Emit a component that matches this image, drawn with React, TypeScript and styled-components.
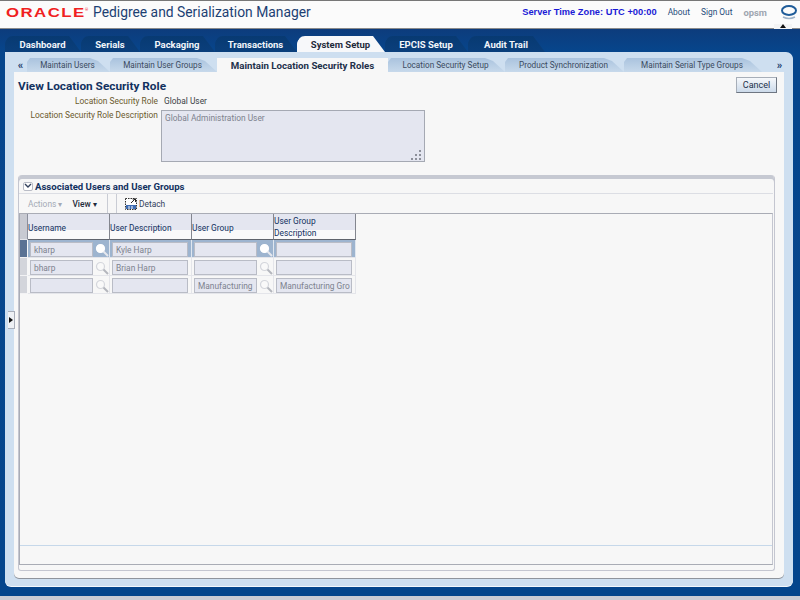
import React from "react";
import styled, { createGlobalStyle } from "styled-components";

const mainTabs = [
  { label: "Dashboard", width: 76 },
  { label: "Serials", width: 59 },
  { label: "Packaging", width: 75 },
  { label: "Transactions", width: 82 },
  { label: "System Setup", width: 88, active: true },
  { label: "EPCIS Setup", width: 83 },
  { label: "Audit Trail", width: 77 },
];

const subTabs = [
  { label: "Maintain Users", width: 83 },
  { label: "Maintain User Groups", width: 107 },
  { label: "Maintain Location Security Roles", width: 171, active: true },
  { label: "Location Security Setup", width: 117 },
  { label: "Product Synchronization", width: 119 },
  { label: "Maintain Serial Type Groups", width: 138 },
];

const rows = [
  { username: "kharp", description: "Kyle Harp", group: "", groupDescription: "", selected: true },
  { username: "bharp", description: "Brian Harp", group: "", groupDescription: "" },
  { username: "", description: "", group: "Manufacturing", groupDescription: "Manufacturing Gro" },
];

const Lens: React.FC<{ $on?: boolean }> = ({ $on }) => (
  <svg width="14" height="14" viewBox="0 0 14 14">
    <circle cx="5.5" cy="5.5" r="4" fill={$on ? "#ffffff" : "#f9f9f9"} stroke={$on ? "#ffffff" : "#d4d6dc"} strokeWidth="1.2" />
    <path d="M8.5 8.5 L13 13" stroke={$on ? "#e6e8ee" : "#b4b6bd"} strokeWidth="2" />
  </svg>
);

const App: React.FC = () => (
  <Page>
    <GlobalStyle />
    <Header>
      <Logo>ORACLE</Logo>
      <Mark>®</Mark>
      <Product>Pedigree and Serialization Manager</Product>
      <HeaderLinks>
        <TimeZone>Server Time Zone: UTC +00:00</TimeZone>
        <HeaderLink>About</HeaderLink>
        <HeaderLink>Sign Out</HeaderLink>
        <UserName>opsm</UserName>
        <svg width="18" height="15" viewBox="0 0 18 15">
          <ellipse cx="9" cy="5.5" rx="7" ry="4.4" fill="none" stroke="#1f5c99" strokeWidth="2" />
          <path d="M3 12 Q9 15 15 12" fill="none" stroke="#9fb3c8" strokeWidth="1.5" />
        </svg>
      </HeaderLinks>
      <CollapseHandle />
    </Header>
    <Body>
      <MainTabs>
        {mainTabs.map((t) => (
          <MainTab key={t.label} $w={t.width} $active={t.active}>
            {t.label}
          </MainTab>
        ))}
      </MainTabs>
      <Panel>
        <SplitterHandle />
        <SubTabs>
          <ScrollLeft>«</ScrollLeft>
          {subTabs.map((t) => (
            <SubTab key={t.label} $w={t.width} $active={t.active}>
              {t.label}
            </SubTab>
          ))}
          <ScrollRight>»</ScrollRight>
        </SubTabs>
        <Content>
          <TitleRow>
            <Title>View Location Security Role</Title>
            <CancelButton>Cancel</CancelButton>
          </TitleRow>
          <FormRow>
            <FieldLabel>Location Security Role</FieldLabel>
            <FieldValue>Global User</FieldValue>
          </FormRow>
          <DescriptionRow>
            <FieldLabel>Location Security Role Description</FieldLabel>
            <TextArea>
              Global Administration User
              <Grip>
                <svg width="12" height="12" viewBox="0 0 12 12" fill="#8d909a">
                  <rect x="8" y="1" width="2" height="2" />
                  <rect x="4" y="5" width="2" height="2" />
                  <rect x="8" y="5" width="2" height="2" />
                  <rect x="0" y="9" width="2" height="2" />
                  <rect x="4" y="9" width="2" height="2" />
                  <rect x="8" y="9" width="2" height="2" />
                </svg>
              </Grip>
            </TextArea>
          </DescriptionRow>
          <Section>
            <SectionHeader>
              <Disclosure>
                <svg width="8" height="6" viewBox="0 0 8 6">
                  <path d="M1 1 L4 4 L7 1" fill="none" stroke="#33415c" strokeWidth="1.4" />
                </svg>
              </Disclosure>
              <SectionTitle>Associated Users and User Groups</SectionTitle>
            </SectionHeader>
            <Toolbar>
              <MenuGroup>
                <MenuItem $muted>Actions ▾</MenuItem>
                <MenuItem>View ▾</MenuItem>
              </MenuGroup>
              <DetachButton>
                <svg width="12" height="13" viewBox="0 0 12 13">
                  <rect x="0.5" y="1.5" width="11" height="11" fill="#fff" stroke="#333" strokeDasharray="1.5 1" />
                  <rect x="1" y="8" width="10" height="4" fill="#3f6db3" />
                  <path d="M4 9 V12 M7 9 V12" stroke="#fff" />
                  <path d="M6 6 L10 2 M7.5 2 H10.5 V5" stroke="#222" fill="none" />
                </svg>
                Detach
              </DetachButton>
            </Toolbar>
            <TableBox>
              <TableArea>
                <Grid>
                  <CornerCell />
                  <HeadCell>Username</HeadCell>
                  <HeadCell>User Description</HeadCell>
                  <HeadCell>User Group</HeadCell>
                  <HeadCell $stacked>
                    <span>User Group</span>
                    <span>Description</span>
                  </HeadCell>
                  {rows.map((r) => (
                    <React.Fragment key={r.username + r.group}>
                      <RowHeader $on={r.selected} />
                      <BodyCell $on={r.selected}>
                        <CellInput $w={63}>{r.username}</CellInput>
                        <LensBox><Lens $on={r.selected} /></LensBox>
                      </BodyCell>
                      <BodyCell $on={r.selected}>
                        <CellInput $w={76}>{r.description}</CellInput>
                      </BodyCell>
                      <BodyCell $on={r.selected}>
                        <CellInput $w={65}>{r.group}</CellInput>
                        <LensBox><Lens $on={r.selected} /></LensBox>
                      </BodyCell>
                      <BodyCell $on={r.selected}>
                        <CellInput $w={76}>{r.groupDescription}</CellInput>
                      </BodyCell>
                    </React.Fragment>
                  ))}
                </Grid>
              </TableArea>
              <TableFooter />
            </TableBox>
          </Section>
        </Content>
      </Panel>
    </Body>
  </Page>
);

const GlobalStyle = createGlobalStyle`
  html, body {
    margin: 0;
    padding: 0;
    overflow: hidden;
  }
  * {
    box-sizing: border-box;
  }
  body {
    font-family: Roboto, "Liberation Sans", sans-serif;
    font-size: 8.4px;
  }
`;

const Page = styled.div`
  width: 800px;
  height: 600px;
  display: flex;
  flex-direction: column;
  background: #c9cbd4;
  padding-bottom: 4px;
`;

const Header = styled.header`
  position: relative;
  height: 29px;
  flex: none;
  display: flex;
  align-items: center;
  padding: 0 2px 5px 6px;
  background: #fbfbfb;
  border-top: 1px solid #777;
  border-bottom: 1px solid #8a8a8a;
`;

const Logo = styled.span`
  font-family: "Liberation Sans", sans-serif;
  font-size: 14px;
  font-weight: 700;
  letter-spacing: 1.2px;
  color: #f02020;
  line-height: 1;
  display: inline-block;
  width: 79px;
  transform: scale(1.2, 0.95);
  transform-origin: left center;
`;

const Mark = styled.span`
  font-size: 4px;
  color: #f02020;
  width: 8px;
  margin-bottom: 6px;
`;

const Product = styled.span`
  font-size: 13.85px;
  color: #1c3f73;
`;

const HeaderLinks = styled.div`
  margin-left: auto;
  display: flex;
  align-items: center;
  gap: 11px;
`;

const TimeZone = styled.span`
  font-family: "Liberation Sans", sans-serif;
  font-size: 9.3px;
  font-weight: 700;
  color: #1a1ad6;
`;

const HeaderLink = styled.span`
  font-size: 8.4px;
  color: #264b7a;
`;

const UserName = styled.span`
  font-size: 9.4px;
  font-weight: 700;
  color: #9ea6b0;
  margin-right: 2px;
`;

const CollapseHandle = styled.div`
  position: absolute;
  right: 8px;
  bottom: -1px;
  width: 18px;
  height: 5px;
  background: #f4f4f4;
  &::after {
    content: "";
    position: absolute;
    left: 6px;
    top: 0;
    border: 3px solid transparent;
    border-top: 0;
    border-bottom: 4px solid #111;
  }
`;

const Body = styled.main`
  flex: 1;
  display: flex;
  flex-direction: column;
  padding: 7px 7px 10px 5px;
  background: linear-gradient(#0d3c7c 0, #06468d 24px, #04458c 100%);
  min-height: 0;
`;

const MainTabs = styled.nav`
  display: flex;
  height: 16px;
  flex: none;
`;

const MainTab = styled.div<{ $w: number; $active?: boolean }>`
  width: ${(p) => p.$w}px;
  height: 16px;
  display: flex;
  align-items: center;
  justify-content: center;
  padding-right: 1px;
  font-size: 9.5px;
  font-weight: 700;
  color: ${(p) => (p.$active ? "#1e2a3a" : "#f2f6fb")};
  background: ${(p) => (p.$active ? "#f7f8fa" : "linear-gradient(#083a72, #0a3f7c)")};
  border-radius: 8px 10px 0 0;
  clip-path: polygon(0 100%, 0 6px, 4px 0, calc(100% - 12px) 0, 100% 100%);
`;

const Panel = styled.section`
  position: relative;
  flex: 1;
  display: flex;
  flex-direction: column;
  min-height: 0;
  padding: 6px 9px 8px;
  background: #cedff0;
  border-radius: 0 7px 6px 6px;
  box-shadow: 0 1px 0 #f4f8fc;
`;

const SplitterHandle = styled.div`
  position: absolute;
  left: 3px;
  top: 259px;
  width: 7px;
  height: 18px;
  background: #eef1f5;
  border: 1px solid #a9afba;
  border-left: 0;
  &::after {
    content: "";
    position: absolute;
    left: 1px;
    top: 5px;
    border: 3px solid transparent;
    border-right: 0;
    border-left: 4px solid #111;
  }
`;

const SubTabs = styled.div`
  display: flex;
  height: 14px;
  flex: none;
  margin-right: -9px;
`;

const ScrollLeft = styled.div`
  display: flex;
  width: 13px;
  align-items: center;
  justify-content: center;
  font-size: 11px;
  font-weight: 700;
  color: #23406f;
`;

const ScrollRight = styled(ScrollLeft)`
  width: 31px;
  padding-left: 4px;
`;

const SubTab = styled.div<{ $w: number; $active?: boolean }>`
  width: ${(p) => p.$w}px;
  height: 14px;
  display: flex;
  align-items: center;
  justify-content: center;
  padding-right: ${(p) => (p.$active ? 0 : 2)}px;
  font-size: ${(p) => (p.$active ? 9.7 : 8.2)}px;
  font-weight: ${(p) => (p.$active ? 700 : 400)};
  color: ${(p) => (p.$active ? "#22304a" : "#3b4a60")};
  white-space: nowrap;
  background: ${(p) => (p.$active ? "#f7f7f7" : "linear-gradient(#aac3de, #c7d9eb)")};
  clip-path: ${(p) =>
    p.$active ? "none" : "polygon(0 100%, 0 4px, 3px 0, calc(100% - 20px) 0, calc(100% - 12px) 3px, 100% 100%)"};
`;

const Content = styled.div`
  flex: 1;
  min-height: 0;
  display: flex;
  flex-direction: column;
  padding: 4px 9px 7px 4px;
  background: #f7f7f7;
  border-radius: 0 0 5px 5px;
  box-shadow: 0 1px 0 #8f949c;
`;

const TitleRow = styled.div`
  display: flex;
  justify-content: space-between;
  align-items: flex-start;
  height: 18px;
  flex: none;
  margin-right: -2px;
`;

const Title = styled.h1`
  margin: 3px 0 0;
  font-size: 11.8px;
  line-height: 15px;
  font-weight: 700;
  color: #12315f;
`;

const CancelButton = styled.button`
  width: 41px;
  height: 16px;
  margin-top: 1px;
  padding: 0;
  font: inherit;
  font-size: 9px;
  color: #22304a;
  background: linear-gradient(#f6f8fb, #ccdaea);
  border: 1px solid #a7aeb8;
  border-right-color: #6e7682;
  border-bottom-color: #6e7682;
`;

const FormRow = styled.div`
  display: flex;
  align-items: center;
  height: 14px;
  flex: none;
  gap: 6px;
`;

const FieldLabel = styled.div`
  width: 140px;
  text-align: right;
  white-space: nowrap;
  color: #6b5a2e;
`;

const FieldValue = styled.div`
  color: #3a3f46;
`;

const DescriptionRow = styled.div`
  display: flex;
  align-items: flex-start;
  gap: 3px;
  margin-top: 2px;
  flex: none;
`;

const TextArea = styled.div`
  position: relative;
  width: 264px;
  height: 52px;
  padding: 2px 3px;
  color: #7d828e;
  background: #e4e6f0;
  border: 1px solid #a5a9b3;
`;

const Grip = styled.span`
  position: absolute;
  right: 1px;
  bottom: 0;
  line-height: 0;
`;

const Section = styled.section`
  flex: 1;
  min-height: 0;
  margin-top: 13px;
  display: flex;
  flex-direction: column;
  padding: 4px 1px 5px 0;
  background: #f7f7f7;
  border: 1px solid #c4c6d0;
  border-top: 0;
  border-radius: 4px 4px 3px 3px;
  box-shadow: inset 0 4px 0 #c6c9d2;
`;

const SectionHeader = styled.div`
  display: flex;
  align-items: center;
  gap: 2px;
  height: 14px;
  flex: none;
  padding-left: 4px;
`;

const Disclosure = styled.span`
  width: 10px;
  height: 9px;
  display: inline-flex;
  align-items: center;
  justify-content: center;
  background: #fff;
  border: 1px solid #b9bcc6;
  border-radius: 2px;
`;

const SectionTitle = styled.h2`
  margin: 0;
  font-size: 9.6px;
  font-weight: 700;
  color: #12315f;
`;

const Toolbar = styled.div`
  display: flex;
  align-items: center;
  height: 20px;
  flex: none;
  border-top: 1px solid #dcdee4;
`;

const MenuGroup = styled.div`
  display: flex;
  align-items: center;
  gap: 10px;
  width: 89px;
  height: 100%;
  padding-left: 9px;
  border-right: 1px solid #c9ccd4;
`;

const MenuItem = styled.span<{ $muted?: boolean }>`
  font-size: 8.4px;
  font-weight: ${(p) => (p.$muted ? 400 : 500)};
  color: ${(p) => (p.$muted ? "#a4aab6" : "#1e2a3a")};
`;

const DetachButton = styled.span`
  display: flex;
  align-items: center;
  gap: 2px;
  height: 100%;
  margin-left: 8px;
  padding-left: 8px;
  color: #33415c;
  border-left: 1px solid #c9ccd4;
`;

const TableBox = styled.div`
  flex: 1;
  min-height: 0;
  display: flex;
  flex-direction: column;
  border: 1px solid #a9acb5;
  border-right-color: #c4c6d0;
`;

const TableArea = styled.div`
  flex: 1;
  min-height: 0;
`;

const Grid = styled.div`
  display: grid;
  grid-template-columns: 8px repeat(4, 82px);
  grid-template-rows: 26px repeat(3, 18px);
  width: 336px;
`;

const CornerCell = styled.div`
  background: #c8cad2;
  border-right: 1px solid #8b8f9c;
  border-bottom: 1px solid #e6e7ec;
`;

const HeadCell = styled.div<{ $stacked?: boolean }>`
  display: flex;
  flex-direction: column;
  justify-content: ${(p) => (p.$stacked ? "flex-start" : "center")};
  padding: ${(p) => (p.$stacked ? "1px 0 0 0" : "3px 0 0 0")};
  line-height: 12px;
  color: #12315f;
  background: linear-gradient(#e4e6f0 16px, #f9f9fa 16px);
  border-right: 1px solid #83868f;
  border-bottom: 1px solid #5f636c;
`;

const RowHeader = styled.div<{ $on?: boolean }>`
  background: ${(p) => (p.$on ? "#5a7294" : "#d3d5db")};
  border-right: 1px solid #f7f7f7;
  border-bottom: 1px solid #f2f2f4;
`;

const BodyCell = styled.div<{ $on?: boolean }>`
  display: flex;
  align-items: flex-end;
  gap: 2px;
  padding: 0 0 0 2px;
  background: ${(p) => (p.$on ? "#9db4cf" : "#f7f7f7")};
  border-right: 1px solid ${(p) => (p.$on ? "#dfe6ef" : "#e4e5ea")};
  border-bottom: 1px solid #e4e5ea;
`;

const CellInput = styled.div<{ $w: number }>`
  width: ${(p) => p.$w}px;
  height: 15px;
  padding: 0 3px;
  line-height: 14px;
  color: #7d828e;
  background: #e4e6f0;
  border: 1px solid #b9bcc6;
  white-space: nowrap;
  overflow: hidden;
`;

const LensBox = styled.span`
  display: inline-flex;
  line-height: 0;
`;

const TableFooter = styled.div`
  height: 19px;
  flex: none;
  border-top: 1px solid #c6d8ea;
`;

export default App;
